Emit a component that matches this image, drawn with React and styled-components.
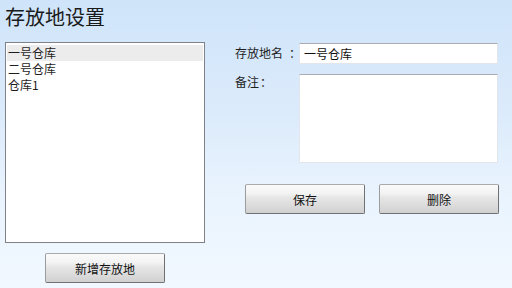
import React, { useState } from "react";
import styled, { createGlobalStyle } from "styled-components";

const GlobalStyle = createGlobalStyle`
  html, body {
    margin: 0;
    padding: 0;
  }
  body {
    font-family: "Noto Sans CJK SC", "Noto Sans", sans-serif;
    color: #1e1e1e;
  }
`;

const Page = styled.div`
  width: 512px;
  height: 288px;
  box-sizing: border-box;
  padding: 0 0 0 5px;
  background: linear-gradient(180deg, #cfe4fa 0%, #dcebfb 40%, #eaf4fe 70%, #f1f8ff 100%);
  overflow: hidden;
`;

const Title = styled.h1`
  margin: 0;
  height: 42px;
  padding-top: 4px;
  box-sizing: border-box;
  font-size: 20px;
  font-weight: normal;
  line-height: 26px;
  color: #1a1a1a;
`;

const Body = styled.div`
  display: flex;
  align-items: flex-start;
`;

const LeftColumn = styled.div`
  width: 200px;
  display: flex;
  flex-direction: column;
  align-items: center;
  gap: 10px;
`;

const ListBox = styled.ul`
  list-style: none;
  margin: 0;
  padding: 2px 1px;
  width: 200px;
  height: 201px;
  box-sizing: border-box;
  background: #fff;
  border: 1px solid #7f8388;
`;

const ListItem = styled.li`
  height: 16px;
  line-height: 16px;
  font-size: 12px;
  padding-left: 1px;
  cursor: default;
  background: ${(p) => (p.$selected ? "#ececec" : "transparent")};
`;

const RightColumn = styled.div`
  margin-left: 30px;
  width: 264px;
  display: flex;
  flex-direction: column;
`;

const FormRow = styled.div`
  display: flex;
  align-items: flex-start;
  margin-top: ${(p) => p.$top || 0}px;
`;

const Label = styled.label`
  width: 64px;
  font-size: 12px;
  line-height: 16px;
  padding-top: ${(p) => p.$pad || 0}px;
  white-space: pre;
`;

const Colon = styled.span`
  margin-left: ${(p) => p.$gap || 0}px;
`;

const TextInput = styled.input`
  width: 199px;
  height: 21px;
  box-sizing: border-box;
  margin: 0;
  padding: 0 4px;
  border: 1px solid #e2e6ea;
  border-top-color: #a9acb0;
  background: #fff;
  font-family: inherit;
  font-size: 12px;
  color: #111;
  outline: none;
`;

const TextArea = styled.textarea`
  width: 199px;
  height: 89px;
  box-sizing: border-box;
  margin: 0;
  padding: 3px 4px;
  border: 1px solid #e2e6ea;
  border-top-color: #a9acb0;
  background: #fff;
  resize: none;
  font-family: inherit;
  font-size: 12px;
  outline: none;
`;

const ButtonRow = styled.div`
  display: flex;
  gap: 14px;
  margin: 21px 0 0 10px;
`;

const Button = styled.button`
  width: 120px;
  height: 30px;
  box-sizing: border-box;
  margin: 0;
  padding: 0;
  border: 1px solid #6f7173;
  border-top-color: #a8aaac;
  border-left-color: #9a9c9e;
  border-radius: 2px;
  background: linear-gradient(
    180deg,
    #fafafa 0%,
    #f3f3f3 30%,
    #e6e6e6 45%,
    #dddddd 70%,
    #d0d0d0 100%
  );
  font-family: inherit;
  font-size: 12px;
  color: #111;
  cursor: pointer;
`;

const items = ["一号仓库", "二号仓库", "仓库1"];

export default function App() {
  const [selected, setSelected] = useState(0);
  const [name, setName] = useState(items[0]);
  const [note, setNote] = useState("");

  return (
    <Page>
      <GlobalStyle />
      <Title>存放地设置</Title>
      <Body>
        <LeftColumn>
          <ListBox>
            {items.map((item, i) => (
              <ListItem
                key={item}
                $selected={i === selected}
                onClick={() => {
                  setSelected(i);
                  setName(item);
                }}
              >
                {item}
              </ListItem>
            ))}
          </ListBox>
          <Button>新增存放地</Button>
        </LeftColumn>
        <RightColumn>
          <FormRow $top={1}>
            <Label $pad={2}>
              存放地名<Colon $gap={6}>：</Colon>
            </Label>
            <TextInput value={name} onChange={(e) => setName(e.target.value)} />
          </FormRow>
          <FormRow $top={10}>
            <Label $pad={0}>
              备注<Colon $gap={1}>：</Colon>
            </Label>
            <TextArea value={note} onChange={(e) => setNote(e.target.value)} />
          </FormRow>
          <ButtonRow>
            <Button>保存</Button>
            <Button>删除</Button>
          </ButtonRow>
        </RightColumn>
      </Body>
    </Page>
  );
}
